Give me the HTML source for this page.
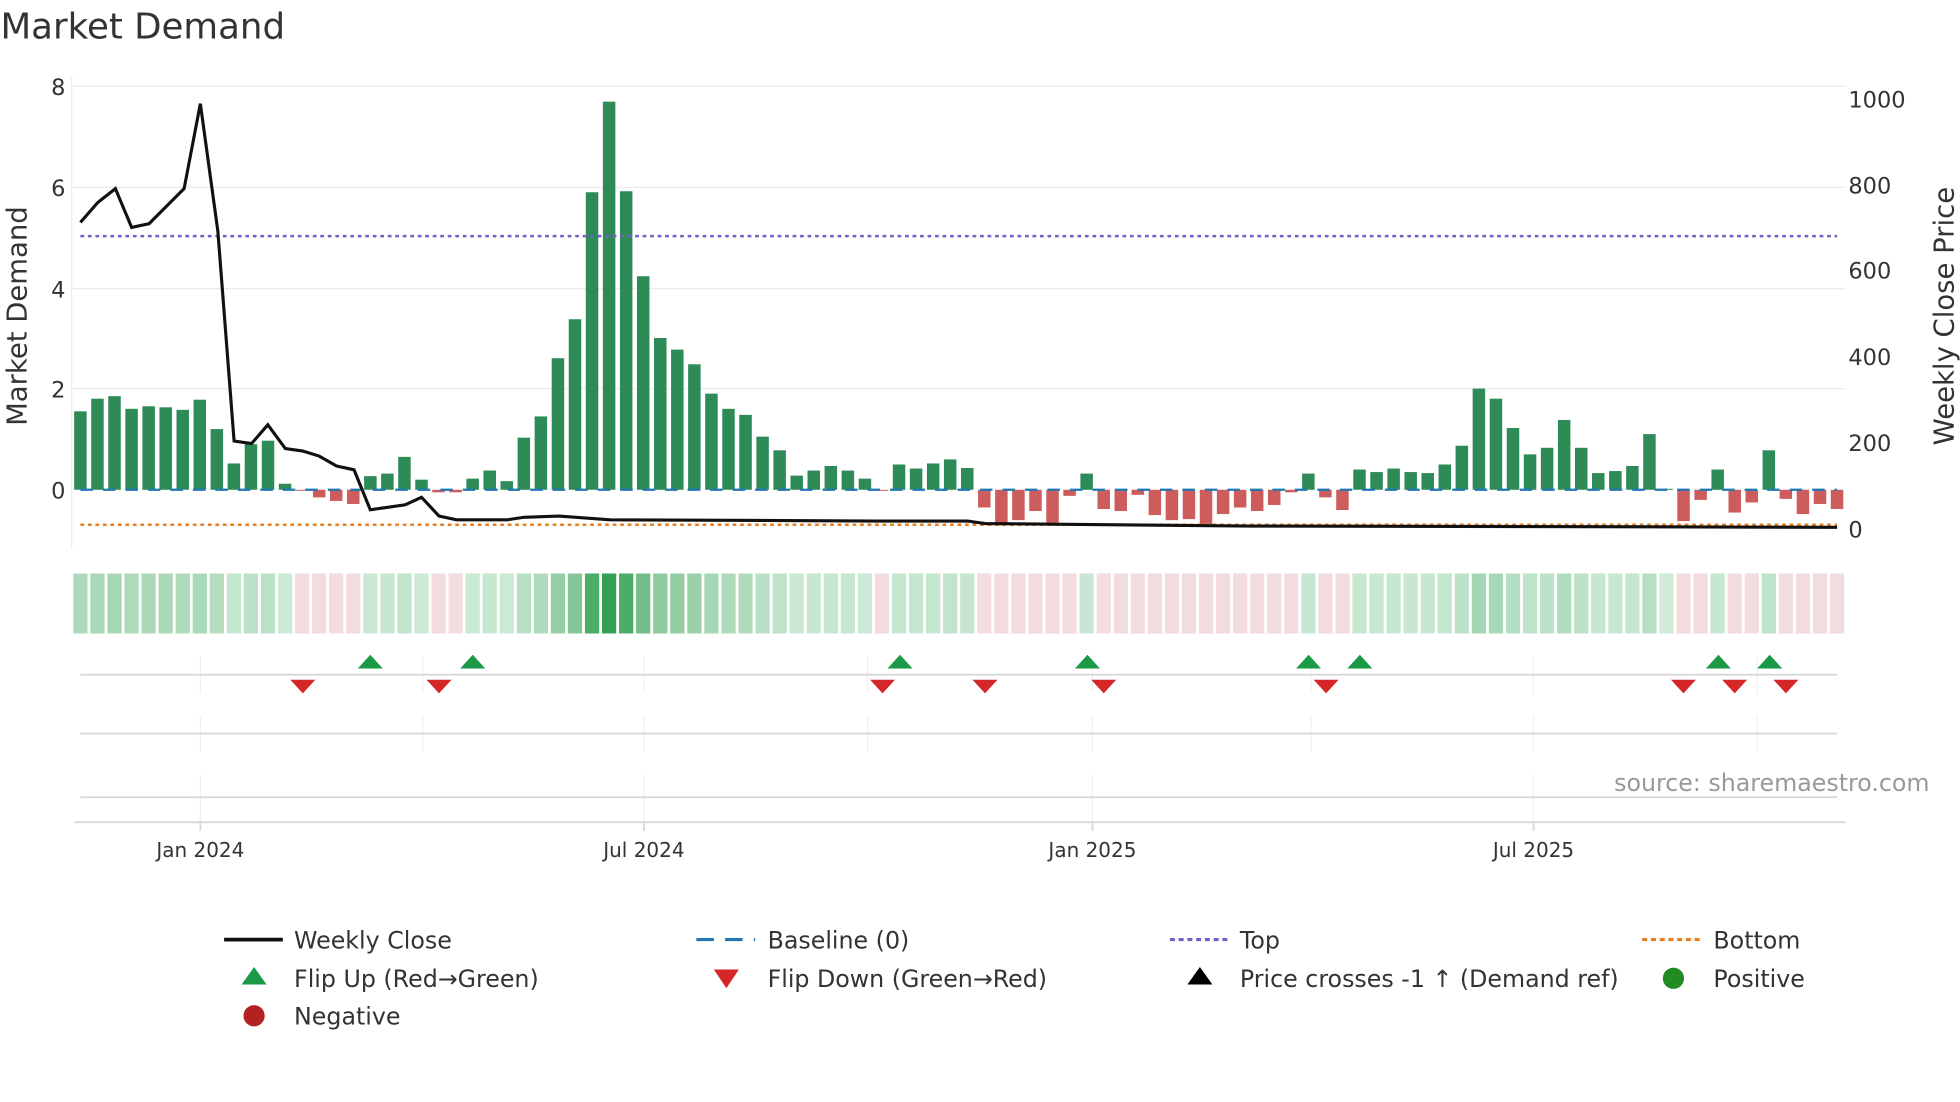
<!DOCTYPE html>
<html><head><meta charset="utf-8"><style>
html,body{margin:0;padding:0;background:#fff;}
svg{display:block;}
text{font-family:"DejaVu Sans","Liberation Sans",sans-serif;fill:#333;}
</style></head><body>
<svg id="s" width="1960" height="1102" viewBox="0 0 1568 882" xmlns="http://www.w3.org/2000/svg">
<text x="0" y="31" font-size="28.5">Market Demand</text>
<g stroke="#ececec" stroke-width="1">
<line x1="57" y1="69" x2="1477" y2="69"/><line x1="57" y1="150" x2="1477" y2="150"/><line x1="57" y1="231" x2="1477" y2="231"/><line x1="57" y1="311" x2="1477" y2="311"/>
<line x1="57" y1="62" x2="57" y2="440"/>
</g>
<g font-size="18" text-anchor="end">
<text x="52" y="76">8</text><text x="52" y="157">6</text><text x="52" y="238">4</text><text x="52" y="318">2</text><text x="52" y="399">0</text>
</g>
<g font-size="18">
<text x="1479" y="86">1000</text><text x="1479" y="155">800</text><text x="1479" y="223">600</text><text x="1479" y="292">400</text><text x="1479" y="361">200</text><text x="1479" y="430">0</text>
</g>
<text transform="translate(21,253) rotate(-90)" font-size="22" text-anchor="middle">Market Demand</text>
<text transform="translate(1563,253) rotate(-90)" font-size="22" text-anchor="middle">Weekly Close Price</text>
<g id="bars"></g>
<line x1="64" y1="392" x2="1470" y2="392" stroke="#1f77b4" stroke-width="1.8" stroke-dasharray="10,8"/>
<line x1="64" y1="189" x2="1470" y2="189" stroke="#7060c8" stroke-width="2" stroke-dasharray="3,3"/>
<line x1="64" y1="420" x2="1470" y2="420" stroke="#e67e22" stroke-width="2" stroke-dasharray="3,3"/>
<polyline fill="none" stroke="#111" stroke-width="2.5" points="64,178 78,162 92,151 105,182 119,179 133,165 147,151 160,83 174,185 187,353 201,355 214,340 228,359 242,361 255,365 269,373 283,376 296,408 310,406 324,404 337,398 351,413 365,416 378,416 406,416 419,414 447,413 488,416 700,417 774,417 788,419 1000,421 1470,422"/>
<g id="strip"></g>
<g stroke="#f0f0f0" stroke-width="1">
<line x1="160" y1="525" x2="160" y2="555"/><line x1="338" y1="525" x2="338" y2="555"/><line x1="515" y1="525" x2="515" y2="555"/><line x1="694" y1="525" x2="694" y2="555"/><line x1="874" y1="525" x2="874" y2="555"/><line x1="1049" y1="525" x2="1049" y2="555"/><line x1="1227" y1="525" x2="1227" y2="555"/><line x1="1406" y1="525" x2="1406" y2="555"/>
<line x1="160" y1="573" x2="160" y2="602"/><line x1="338" y1="573" x2="338" y2="602"/><line x1="515" y1="573" x2="515" y2="602"/><line x1="694" y1="573" x2="694" y2="602"/><line x1="874" y1="573" x2="874" y2="602"/><line x1="1049" y1="573" x2="1049" y2="602"/><line x1="1227" y1="573" x2="1227" y2="602"/><line x1="1406" y1="573" x2="1406" y2="602"/>
<line x1="160" y1="620" x2="160" y2="658"/><line x1="515" y1="620" x2="515" y2="658"/><line x1="874" y1="620" x2="874" y2="658"/><line x1="1227" y1="620" x2="1227" y2="658"/>
</g>
<g stroke="#d8d8d8" stroke-width="1.5">
<line x1="64" y1="540" x2="1470" y2="540"/><line x1="64" y1="587" x2="1470" y2="587"/><line x1="64" y1="638" x2="1470" y2="638"/>
<line x1="59" y1="658" x2="1477" y2="658"/>
<line x1="160" y1="658" x2="160" y2="665"/><line x1="515" y1="658" x2="515" y2="665"/><line x1="874" y1="658" x2="874" y2="665"/><line x1="1227" y1="658" x2="1227" y2="665"/>
</g>
<g id="sig"></g>
<text x="1544" y="633" font-size="19" text-anchor="end" style="fill:#999">source: sharemaestro.com</text>
<g font-size="16" text-anchor="middle">
<text x="160" y="686">Jan 2024</text><text x="515" y="686">Jul 2024</text><text x="874" y="686">Jan 2025</text><text x="1227" y="686">Jul 2025</text>
</g>
<g font-size="19">
<line x1="179" y1="752" x2="226" y2="752" stroke="#111" stroke-width="3"/><text x="235" y="759">Weekly Close</text>
<line x1="557" y1="752" x2="604" y2="752" stroke="#1f77b4" stroke-width="2.5" stroke-dasharray="14,9"/><text x="614" y="759">Baseline (0)</text>
<line x1="936" y1="752" x2="982" y2="752" stroke="#7060c8" stroke-width="2.5" stroke-dasharray="4,3"/><text x="992" y="759">Top</text>
<line x1="1314" y1="752" x2="1360" y2="752" stroke="#e67e22" stroke-width="2.5" stroke-dasharray="4,3"/><text x="1371" y="759">Bottom</text>
<polygon points="193,788 213,788 203,774" fill="#1a9a47"/><text x="235" y="790">Flip Up (Red→Green)</text>
<polygon points="571,776 591,776 581,791" fill="#d62728"/><text x="614" y="790">Flip Down (Green→Red)</text>
<polygon points="950,788 970,788 960,774" fill="#000"/><text x="992" y="790">Price crosses -1 ↑ (Demand ref)</text>
<circle cx="1339" cy="783" r="8.5" fill="#228b22"/><text x="1371" y="790">Positive</text>
<circle cx="203" cy="813" r="8.5" fill="#b22222"/><text x="235" y="820">Negative</text>
</g>
</svg>
<script>
var v=[1.55,1.8,1.85,1.6,1.65,1.63,1.58,1.78,1.2,0.52,0.9,0.97,0.12,-0.02,-0.15,-0.22,-0.28,0.27,0.32,0.65,0.2,-0.05,-0.05,0.22,0.38,0.17,1.03,1.45,2.6,3.37,5.88,7.67,5.9,4.22,3.0,2.77,2.48,1.9,1.6,1.48,1.05,0.78,0.28,0.38,0.47,0.38,0.22,-0.02,0.5,0.42,0.52,0.6,0.43,-0.35,-0.7,-0.6,-0.42,-0.65,-0.12,0.32,-0.38,-0.42,-0.1,-0.5,-0.6,-0.58,-0.68,-0.48,-0.35,-0.42,-0.3,-0.05,0.32,-0.15,-0.4,0.4,0.35,0.42,0.35,0.33,0.5,0.87,2.0,1.8,1.22,0.7,0.83,1.38,0.83,0.33,0.37,0.47,1.1,0.02,-0.62,-0.2,0.4,-0.45,-0.25,0.78,-0.18,-0.48,-0.28,-0.38];
var NS="http://www.w3.org/2000/svg",b=document.getElementById("bars"),st=document.getElementById("strip"),sg=document.getElementById("sig");
function R(g,x,y,w,h,f){var r=document.createElementNS(NS,"rect");r.setAttribute("x",x);r.setAttribute("y",y);r.setAttribute("width",w);r.setAttribute("height",h);r.setAttribute("fill",f);g.appendChild(r);}
var d=13.65;
v.forEach(function(a,i){var cx=64+d*i,h=Math.abs(a)*40.5;
 if(a>=0)R(b,cx-5,392-h,10,h,"#2e8b57");else R(b,cx-5,392,10,h,"#cd5c5c");
 var c;if(a>=0){
  var l=[214,238,222],dk=[52,160,82];var k=Math.min(1,a/7.67*1.05+0.04);
  c="rgb("+Math.round(l[0]+(dk[0]-l[0])*k)+","+Math.round(l[1]+(dk[1]-l[1])*k)+","+Math.round(l[2]+(dk[2]-l[2])*k)+")";}
 else c="#f3dcde";
 R(st,cx-5.7,459,11.4,48,c);
});
function tri(x,up){var p=document.createElementNS(NS,"polygon");
 p.setAttribute("points",up?(x-10)+",535 "+(x+10)+",535 "+x+",524":(x-10)+",544 "+(x+10)+",544 "+x+",555");
 p.setAttribute("fill",up?"#1a9a47":"#d62728");sg.appendChild(p);}
[296,378,720,870,1047,1088,1375,1416].forEach(function(x){tri(x,true)});
[242,351,706,788,883,1061,1347,1388,1429].forEach(function(x){tri(x,false)});
</script>
</body></html>
